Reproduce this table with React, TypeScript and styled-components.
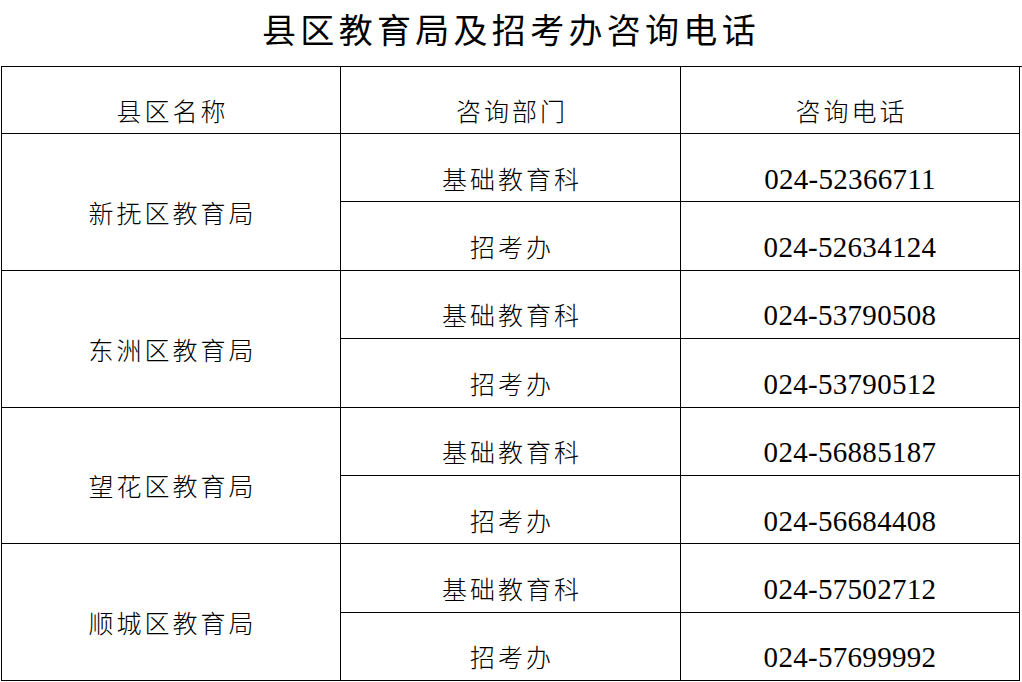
import * as React from "react";
import styled, { createGlobalStyle } from "styled-components";

const districts = [
  { name: "新抚区教育局", phones: ["024-52366711", "024-52634124"] },
  { name: "东洲区教育局", phones: ["024-53790508", "024-53790512"] },
  { name: "望花区教育局", phones: ["024-56885187", "024-56684408"] },
  { name: "顺城区教育局", phones: ["024-57502712", "024-57699992"] },
];

const departments = ["基础教育科", "招考办"];

export default () => (
  <>
    <GlobalStyle />
    <Page>
      <Title>县区教育局及招考办咨询电话</Title>
      <Grid>
        <Cell>县区名称</Cell>
        <Cell>咨询部门</Cell>
        <Cell>咨询电话</Cell>
        {districts.map((d) => (
          <React.Fragment key={d.name}>
            <Cell $span={2}>{d.name}</Cell>
            {departments.map((dep, i) => (
              <React.Fragment key={dep}>
                <Cell>{dep}</Cell>
                <Phone>{d.phones[i]}</Phone>
              </React.Fragment>
            ))}
          </React.Fragment>
        ))}
      </Grid>
    </Page>
  </>
);

const GlobalStyle = createGlobalStyle`
  html, body {
    margin: 0;
    padding: 0;
    background: #fff;
  }
`;

const Page = styled.div`
  width: 1022px;
  height: 682px;
  overflow: hidden;
  font-family: "Noto Sans CJK SC", sans-serif;
  color: #000;
`;

const Title = styled.h1`
  margin: 0;
  height: 66px;
  box-sizing: border-box;
  padding-bottom: 9px;
  display: flex;
  align-items: center;
  justify-content: center;
  font-size: 34px;
  font-weight: 400;
  letter-spacing: 4.3px;
  text-indent: 0;
`;

const Grid = styled.div`
  display: grid;
  grid-template-columns: 339px 340px 339px;
  grid-template-rows: 67px repeat(8, 68.375px);
  margin-left: 1px;
  border-top: 1px solid #000;
  border-left: 1px solid #000;
`;

const Cell = styled.div<{ $span?: number }>`
  grid-row: span ${(p) => p.$span ?? 1};
  display: flex;
  align-items: center;
  justify-content: center;
  box-sizing: border-box;
  padding-top: 21px;
  border-right: 1px solid #000;
  border-bottom: 1px solid #000;
  font-size: 25px;
  font-weight: 300;
  letter-spacing: 3px;
  text-indent: 3px;
  line-height: 1;
`;

const Phone = styled(Cell)`
  font-family: "Liberation Serif", "Noto Sans CJK SC", serif;
  font-size: 29px;
  font-weight: 400;
  letter-spacing: 0.3px;
  text-indent: 0;
  padding-top: 23px;
`;
